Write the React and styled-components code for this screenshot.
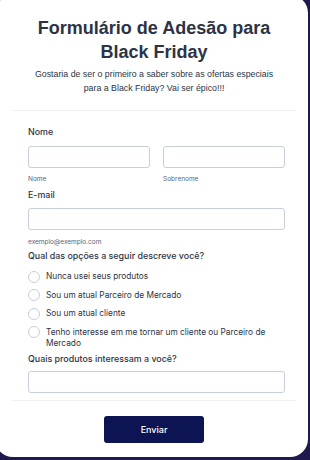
import React from "react";
import styled, { createGlobalStyle } from "styled-components";

const Global = createGlobalStyle`
  html, body {
    margin: 0;
    padding: 0;
    background: #1f1a4b;
    overflow: hidden;
  }
  * { box-sizing: border-box; }
`;

const Card = styled.form`
  width: 313px;
  height: 462px;
  margin: -5px 0 0 -5px;
  padding: 5px 0 0 5px;
  background: #fff;
  border-radius: 18px;
  font-family: Inter, "Liberation Sans", sans-serif;
  color: #2c3345;
`;

const Header = styled.div`
  padding: 16px 12px 0;
  text-align: center;
  font-family: "Liberation Sans", Arial, sans-serif;
`;

const Title = styled.h1`
  margin: 0 auto;
  max-width: 240px;
  font-size: 18px;
  line-height: 24px;
  font-weight: 700;
  color: #2c3345;
`;

const Subtitle = styled.p`
  margin: 3px auto 0;
  max-width: 250px;
  font-size: 8.8px;
  line-height: 14px;
  color: #2c3345;
`;

const Divider = styled.hr`
  margin: ${p => p.$top || 0}px 12px 0;
  border: 0;
  border-top: 1px solid #eef0f3;
`;

const Body = styled.div`
  padding: 15px 23px 0 28px;
  display: flex;
  flex-direction: column;
`;

const Label = styled.div`
  font-size: 8.9px;
  font-weight: 500;
  line-height: 12px;
  margin-bottom: ${p => p.$mb || 8}px;
`;

const Row = styled.div`
  display: grid;
  grid-template-columns: 1fr 1fr;
  column-gap: 13px;
`;

const Field = styled.div`
  display: flex;
  flex-direction: column;
`;

const Input = styled.input`
  width: 100%;
  height: 22px;
  border: 1px solid #c8ceda;
  border-radius: 3px;
  background: #fff;
  outline: none;
`;

const Sub = styled.div`
  font-size: 6.5px;
  line-height: 9px;
  color: #57647e;
  margin-top: ${p => p.$mt || 6}px;
  margin-bottom: ${p => p.$mb || 5}px;
`;

const Options = styled.div`
  display: flex;
  flex-direction: column;
  gap: 7px;
  margin-bottom: 4px;
`;

const Option = styled.label`
  display: flex;
  align-items: flex-start;
  gap: 6px;
  font-size: 8.3px;
  line-height: 11px;
  color: #2c3345;
`;

const Radio = styled.span`
  flex: none;
  width: 12px;
  height: 12px;
  margin-top: -0.5px;
  border: 1px solid #c8ceda;
  border-radius: 50%;
  background: #fff;
`;

const Footer = styled.div`
  display: flex;
  justify-content: center;
  padding-top: 15px;
`;

const Button = styled.button`
  width: 100px;
  height: 27px;
  border: 0;
  border-radius: 3px;
  background: #0c1453;
  color: #fff;
  font-family: Inter, "Liberation Sans", sans-serif;
  font-size: 9px;
  font-weight: 500;
`;

const options = [
  "Nunca usei seus produtos",
  "Sou um atual Parceiro de Mercado",
  "Sou um atual cliente",
  "Tenho interesse em me tornar um cliente ou Parceiro de Mercado",
];

export default function App() {
  return (
    <>
      <Global />
      <Card onSubmit={e => e.preventDefault()}>
        <Header>
          <Title>Formulário de Adesão para Black Friday</Title>
          <Subtitle>
            Gostaria de ser o primeiro a saber sobre as ofertas especiais para a Black Friday? Vai ser épico!!!
          </Subtitle>
        </Header>
        <Divider $top={15} />
        <Body>
          <Label>Nome</Label>
          <Row>
            <Field>
              <Input />
              <Sub $mt={7} $mb={5}>Nome</Sub>
            </Field>
            <Field>
              <Input />
              <Sub $mt={7} $mb={5}>Sobrenome</Sub>
            </Field>
          </Row>
          <Label $mb={7}>E-mail</Label>
          <Input />
          <Sub $mt={8} $mb={3}>exemplo@exemplo.com</Sub>
          <Label $mb={9}>Qual das opções a seguir descreve você?</Label>
          <Options>
            {options.map(o => (
              <Option key={o}>
                <Radio />
                {o}
              </Option>
            ))}
          </Options>
          <Label $mb={6}>Quais produtos interessam a você?</Label>
          <Input />
        </Body>
        <Divider $top={7} />
        <Footer>
          <Button type="submit">Enviar</Button>
        </Footer>
      </Card>
    </>
  );
}
